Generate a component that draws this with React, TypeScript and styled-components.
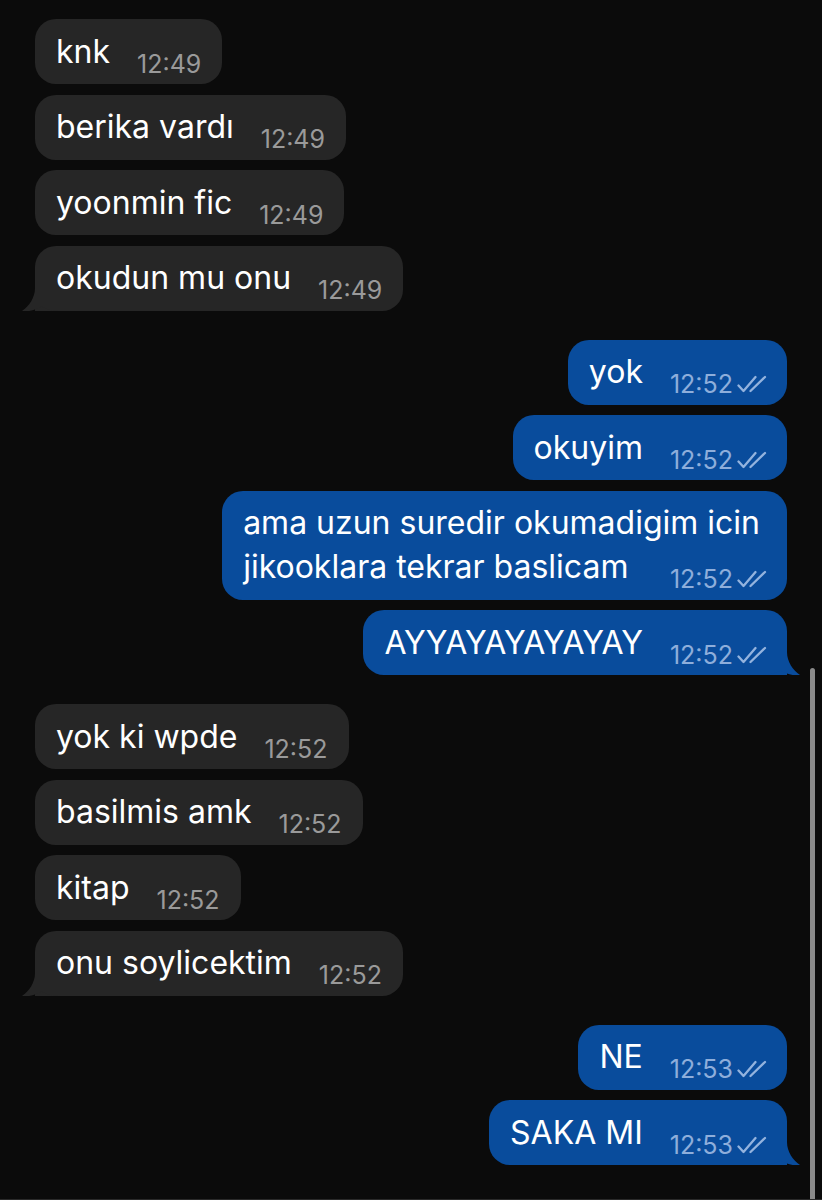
import React from 'react';
import styled, { createGlobalStyle, css } from 'styled-components';

const GlobalStyle = createGlobalStyle`
  html, body {
    margin: 0;
    padding: 0;
    background: #0b0b0b;
  }
  body {
    font-family: Inter, "Noto Sans", "Liberation Sans", sans-serif;
    -webkit-font-smoothing: antialiased;
  }
`;

type Side = 'in' | 'out';

interface Message {
  text: string[];
  time: string;
}

interface Group {
  side: Side;
  messages: Message[];
}

const groups: Group[] = [
  {
    side: 'in',
    messages: [
      { text: ['knk'], time: '12:49' },
      { text: ['berika vardı'], time: '12:49' },
      { text: ['yoonmin fic'], time: '12:49' },
      { text: ['okudun mu onu'], time: '12:49' },
    ],
  },
  {
    side: 'out',
    messages: [
      { text: ['yok'], time: '12:52' },
      { text: ['okuyim'], time: '12:52' },
      { text: ['ama uzun suredir okumadigim icin', 'jikooklara tekrar baslicam'], time: '12:52' },
      { text: ['AYYAYAYAYAYAY'], time: '12:52' },
    ],
  },
  {
    side: 'in',
    messages: [
      { text: ['yok ki wpde'], time: '12:52' },
      { text: ['basilmis amk'], time: '12:52' },
      { text: ['kitap'], time: '12:52' },
      { text: ['onu soylicektim'], time: '12:52' },
    ],
  },
  {
    side: 'out',
    messages: [
      { text: ['NE'], time: '12:53' },
      { text: ['SAKA MI'], time: '12:53' },
    ],
  },
];

const Screen = styled.div`
  position: relative;
  width: 822px;
  height: 1200px;
  overflow: hidden;
  background: #0b0b0b;
  box-sizing: border-box;
  padding: 19px 35px 0;
  display: flex;
  flex-direction: column;
  gap: 29px;
  border-bottom: 1px solid #2a2a2a;
`;

const GroupColumn = styled.div<{ $side: Side }>`
  display: flex;
  flex-direction: column;
  gap: 10.5px;
  align-items: ${(p) => (p.$side === 'in' ? 'flex-start' : 'flex-end')};
`;

const Bubble = styled.div<{ $side: Side; $tail: boolean }>`
  position: relative;
  display: flex;
  flex-direction: column;
  padding: 10.5px 19px 10.5px 21px;
  border-radius: 21px;
  background: ${(p) => (p.$side === 'in' ? '#262626' : '#094c9c')};
  color: #ffffff;
  ${(p) =>
    p.$tail &&
    (p.$side === 'in'
      ? css`
          border-bottom-left-radius: 0;
        `
      : css`
          border-bottom-right-radius: 0;
        `)}
`;

const Line = styled.div`
  position: relative;
  font-size: 32px;
  line-height: 44px;
  white-space: nowrap;
  padding-right: 8px;
`;

const LastLine = styled.div`
  position: relative;
  display: flex;
  align-items: flex-end;
  justify-content: space-between;
`;

const LastText = styled(Line)`
  padding-right: 0;
`;

const Meta = styled.div<{ $side: Side }>`
  position: relative;
  display: flex;
  align-items: center;
  gap: 4px;
  margin-left: 27px;
  margin-bottom: -2px;
  font-size: 25px;
  line-height: 24px;
  white-space: nowrap;
  color: ${(p) => (p.$side === 'in' ? '#9a9a9a' : '#8eaedb')};
  padding-right: ${(p) => (p.$side === 'in' ? '2px' : '0')};
`;

const TailSvg = styled.svg<{ $side: Side }>`
  position: absolute;
  bottom: 0;
  width: 40px;
  height: 28px;
  ${(p) =>
    p.$side === 'in'
      ? css`
          left: -13px;
        `
      : css`
          right: -13px;
          transform: scaleX(-1);
        `}
`;

const Scrollbar = styled.div`
  position: absolute;
  right: 7px;
  top: 668px;
  bottom: 0;
  width: 5px;
  border-radius: 3px 3px 0 0;
  background: #8a8a8a;
`;

const Tail = ({ side }: { side: Side }) => (
  <TailSvg $side={side} viewBox="0 0 40 28" aria-hidden>
    <path
      d="M13 0 L13 5 C13 15 7 23 0 28 C7 29 14 27 19.5 23.5 C25 26.5 31 28 40 28 L40 0 Z"
      fill={side === 'in' ? '#262626' : '#094c9c'}
    />
  </TailSvg>
);

const DoubleCheck = () => (
  <svg width="31" height="18" viewBox="0 0 31 18" fill="none" aria-hidden>
    <path
      d="M1.5 10.5 L6.5 16 L18.5 2"
      stroke="#93b3de"
      strokeWidth="2.3"
      strokeLinecap="round"
      strokeLinejoin="round"
    />
    <path d="M13.5 16 L28 2" stroke="#93b3de" strokeWidth="2.3" strokeLinecap="round" />
  </svg>
);

const App = () => {
  return (
    <>
      <GlobalStyle />
      <Screen>
        {groups.map((g, gi) => (
          <GroupColumn key={gi} $side={g.side}>
            {g.messages.map((m, mi) => {
              const tail = mi === g.messages.length - 1;
              const lines = m.text.slice(0, -1);
              const last = m.text[m.text.length - 1];
              return (
                <Bubble key={mi} $side={g.side} $tail={tail}>
                  {tail && <Tail side={g.side} />}
                  {lines.map((line, li) => (
                    <Line key={li}>{line}</Line>
                  ))}
                  <LastLine>
                    <LastText>{last}</LastText>
                    <Meta $side={g.side}>
                      {m.time}
                      {g.side === 'out' && <DoubleCheck />}
                    </Meta>
                  </LastLine>
                </Bubble>
              );
            })}
          </GroupColumn>
        ))}
        <Scrollbar />
      </Screen>
    </>
  );
};

export default App;
